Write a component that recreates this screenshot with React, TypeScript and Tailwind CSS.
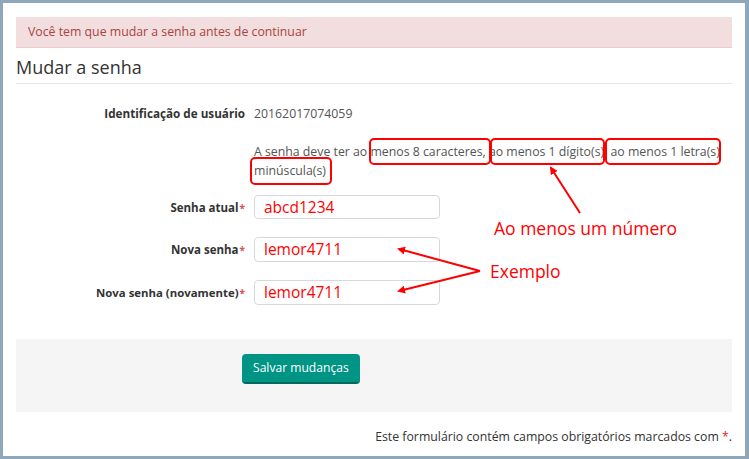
export default function App() {
  return (
    <div
      className="relative w-[749px] h-[459px] bg-[#8fa7bb] pt-[3px] pl-[3px] pr-[4px] pb-[3px]"
      style={{ fontFamily: '"Open Sans", "Liberation Sans", sans-serif' }}
    >
      <div className="h-full bg-white px-[13px] pt-[14px] flex flex-col">
        {/* Alert */}
        <div className="h-[31px] bg-[#f2dede] border-b border-[#ebccd1] text-[#a94442] text-[12.3px] px-[12px] flex items-center">
          Você tem que mudar a senha antes de continuar
        </div>

        <h2 className="mt-[7px] pb-[4px] text-[18px] leading-[24px] text-[#333] border-b border-[#e5e5e5]">
          Mudar a senha
        </h2>

        {/* Form */}
        <div className="grid grid-cols-[229px_1fr] gap-x-[9px] text-[12.3px] leading-[19px]">
          <div className="mt-[20px] font-bold text-[11.7px] text-[#333] text-right">Identificação de usuário</div>
          <div className="mt-[20px] text-[#555]">20162017074059</div>

          <div></div>
          <div className="mt-[19px] text-[12.3px] text-[#555]">
            A senha deve ter ao menos 8 caracteres, ao menos 1 dígito(s), ao menos 1 letra(s) minúscula(s)
          </div>

          <div className="mt-[15px] h-[24px] flex items-center justify-end font-bold text-[11.5px] text-[#333]">
            Senha atual<span className="text-[#d9534f] text-[10px] ml-[1px] self-start mt-[4px]">*</span>
          </div>
          <div className="mt-[15px]">
            <div className="w-[186px] h-[24px] rounded-[4px] border border-[#d8d8d8] pl-[9px] flex items-center text-[15.5px] text-[#ff0000]">
              abcd1234
            </div>
          </div>

          <div className="mt-[18px] h-[25px] flex items-center justify-end font-bold text-[11.5px] text-[#333]">
            Nova senha<span className="text-[#d9534f] text-[10px] ml-[1px] self-start mt-[4px]">*</span>
          </div>
          <div className="mt-[18px]">
            <div className="w-[186px] h-[25px] rounded-[4px] border border-[#d8d8d8] pl-[9px] flex items-center text-[15.5px] text-[#ff0000]">
              lemor4711
            </div>
          </div>

          <div className="mt-[18px] h-[25px] flex items-center justify-end font-bold text-[11.4px] text-[#333]">
            Nova senha (novamente)<span className="text-[#d9534f] text-[10px] ml-[1px] self-start mt-[4px]">*</span>
          </div>
          <div className="mt-[18px]">
            <div className="w-[186px] h-[25px] rounded-[4px] border border-[#d8d8d8] pl-[9px] flex items-center text-[15.5px] text-[#ff0000]">
              lemor4711
            </div>
          </div>
        </div>

        {/* Action bar */}
        <div className="mt-[34px] h-[73px] bg-[#f5f5f5] pt-[15px] pl-[226px]">
          <button className="h-[30px] px-[11px] rounded-[4px] bg-[#009485] border-b-2 border-[#00695c] text-white text-[12.1px]">
            Salvar mudanças
          </button>
        </div>

        <div className="mt-[16px] text-right text-[12.3px] leading-[18px] text-[#333]">
          Este formulário contém campos obrigatórios marcados com <span className="text-[#e01e1e]">*</span>.
        </div>
      </div>

      {/* Annotation overlay */}
      <svg className="absolute inset-0 pointer-events-none" width="749" height="459" viewBox="0 0 749 459">
        <defs>
          <marker id="ah" markerWidth="8" markerHeight="8" refX="6" refY="4" orient="auto" markerUnits="userSpaceOnUse">
            <path d="M0,0 L8,4 L0,8 z" fill="#ff0000" />
          </marker>
        </defs>
        <g fill="none" stroke="#ff0000" strokeWidth="2">
          <rect x="370" y="139" width="120" height="25" rx="4" />
          <rect x="491" y="139" width="113" height="25" rx="4" />
          <rect x="606" y="139" width="114" height="25" rx="4" />
          <rect x="251" y="158" width="80" height="26" rx="4" />
          <line x1="580" y1="213" x2="551" y2="168" markerEnd="url(#ah)" />
          <line x1="480" y1="271" x2="399" y2="249" markerEnd="url(#ah)" />
          <line x1="480" y1="271" x2="399" y2="291" markerEnd="url(#ah)" />
        </g>
      </svg>
      <div className="absolute left-[494px] top-[216px] text-[17.5px] leading-[24px] text-[#ff0000]">Ao menos um número</div>
      <div className="absolute left-[490px] top-[259px] text-[17.5px] leading-[24px] text-[#ff0000]">Exemplo</div>
    </div>
  );
}
